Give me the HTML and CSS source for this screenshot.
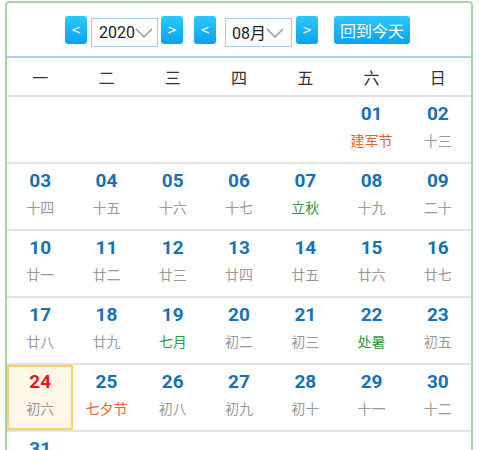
FILE: index.html
```html
<!DOCTYPE html>
<html lang="zh">
<head>
<meta charset="utf-8">
<link rel="stylesheet" href="styles.css">
</head>
<body>
<div class="cal">
  <div class="head">
    <span class="btn prev-y">&lt;</span>
    <span class="sel year">2020<svg class="chev" viewBox="0 0 18 10" width="18" height="10"><path d="M1 1 L9 9 L17 1" fill="none" stroke="#999" stroke-width="1.5"/></svg></span>
    <span class="btn next-y">&gt;</span>
    <span class="btn prev-m">&lt;</span>
    <span class="sel month">08月<svg class="chev" viewBox="0 0 18 10" width="18" height="10"><path d="M1 1 L9 9 L17 1" fill="none" stroke="#999" stroke-width="1.5"/></svg></span>
    <span class="btn next-m">&gt;</span>
    <span class="btn today">回到今天</span>
  </div>
  <div class="week">
    <span>一</span><span>二</span><span>三</span><span>四</span><span>五</span><span>六</span><span>日</span>
  </div>
  <div class="grid">
    <div class="cell"></div><div class="cell"></div><div class="cell"></div><div class="cell"></div><div class="cell"></div>
    <div class="cell"><b>01</b><i class="fest">建军节</i></div>
    <div class="cell"><b>02</b><i>十三</i></div>

    <div class="cell"><b>03</b><i>十四</i></div>
    <div class="cell"><b>04</b><i>十五</i></div>
    <div class="cell"><b>05</b><i>十六</i></div>
    <div class="cell"><b>06</b><i>十七</i></div>
    <div class="cell"><b>07</b><i class="term">立秋</i></div>
    <div class="cell"><b>08</b><i>十九</i></div>
    <div class="cell"><b>09</b><i>二十</i></div>

    <div class="cell"><b>10</b><i>廿一</i></div>
    <div class="cell"><b>11</b><i>廿二</i></div>
    <div class="cell"><b>12</b><i>廿三</i></div>
    <div class="cell"><b>13</b><i>廿四</i></div>
    <div class="cell"><b>14</b><i>廿五</i></div>
    <div class="cell"><b>15</b><i>廿六</i></div>
    <div class="cell"><b>16</b><i>廿七</i></div>

    <div class="cell"><b>17</b><i>廿八</i></div>
    <div class="cell"><b>18</b><i>廿九</i></div>
    <div class="cell"><b>19</b><i class="term">七月</i></div>
    <div class="cell"><b>20</b><i>初二</i></div>
    <div class="cell"><b>21</b><i>初三</i></div>
    <div class="cell"><b>22</b><i class="term">处暑</i></div>
    <div class="cell"><b>23</b><i>初五</i></div>

    <div class="cell current"><b>24</b><i>初六</i></div>
    <div class="cell"><b>25</b><i class="fest">七夕节</i></div>
    <div class="cell"><b>26</b><i>初八</i></div>
    <div class="cell"><b>27</b><i>初九</i></div>
    <div class="cell"><b>28</b><i>初十</i></div>
    <div class="cell"><b>29</b><i>十一</i></div>
    <div class="cell"><b>30</b><i>十二</i></div>

    <div class="cell"><b>31</b><i>十三</i></div>
    <div class="cell"></div><div class="cell"></div><div class="cell"></div><div class="cell"></div><div class="cell"></div><div class="cell"></div>
  </div>
</div>
</body>
</html>
```
FILE: styles.css
```css
html, body {
  margin: 0;
  padding: 0;
  background: #fff;
}
body {
  font-family: Roboto, "Noto Sans CJK SC", sans-serif;
  overflow: hidden;
}
.cal {
  margin: 1px 0 0 5px;
  width: 464px;
  border: 2px solid #a6d4a9;
  border-radius: 4px;
  background: #fff;
}
.head {
  display: flex;
  align-items: center;
  padding-left: 58px;
  border-bottom: 2px solid #a9d3ea;
  box-sizing: border-box;
  height: 55px;
}
.btn {
  display: inline-flex;
  align-items: center;
  justify-content: center;
  height: 28px;
  width: 22px;
  color: #fff;
  font-size: 12px;
  font-family: "DejaVu Sans", sans-serif;
  border-radius: 3px;
  background: linear-gradient(#2ec7fb, #0aa2f2);
  box-sizing: border-box;
  margin-top: 1px;
}
.sel {
  display: inline-flex;
  align-items: center;
  height: 29px;
  width: 67px;
  border: 1px solid #a9cde3;
  box-sizing: border-box;
  font-size: 16px;
  color: #222;
  padding-left: 7px;
  margin-top: 5px;
  font-family: Roboto, "Noto Sans CJK SC", sans-serif;
}
.chev { margin-top: 2px; }
.prev-y { margin-right: 4px; }
.year { margin-right: 3px; }
.next-y { margin-right: 11px; }
.prev-m { margin-right: 9px; }
.month { margin-right: 4px; padding-left: 6px; }
.next-m { margin-right: 16px; }
.today {
  width: 76px;
  font-size: 16px;
  font-family: "Noto Sans CJK SC", sans-serif;
}
.week {
  display: grid;
  grid-template-columns: repeat(7, 1fr);
  height: 37px;
  align-items: center;
  border-bottom: 2px solid #e2e2e2;
  font-family: "Noto Sans CJK SC", sans-serif;
  font-size: 16px;
  color: #333;
  text-align: center;
}
.grid {
  display: grid;
  grid-template-columns: repeat(7, 1fr);
}
.cell {
  height: 65px;
  border-bottom: 2px solid #e2e2e2;
  display: flex;
  flex-direction: column;
  align-items: center;
}
.cell b {
  display: block;
  font-size: 19px;
  font-weight: 700;
  color: #1572b6;
  line-height: 24px;
  margin-top: 5px;
}
.cell i {
  display: block;
  font-style: normal;
  font-family: "Noto Sans CJK SC", sans-serif;
  font-size: 14px;
  color: #999;
  line-height: 20px;
  margin-top: 4px;
}
.cell i.fest { color: #e3622f; }
.cell i.term { color: #2f9b3e; }
.cell.current {
  background: #fff7e7;
  box-shadow: inset 0 0 0 2px #fcd25f;
}
.cell.current b { color: #ea1616; }
```
